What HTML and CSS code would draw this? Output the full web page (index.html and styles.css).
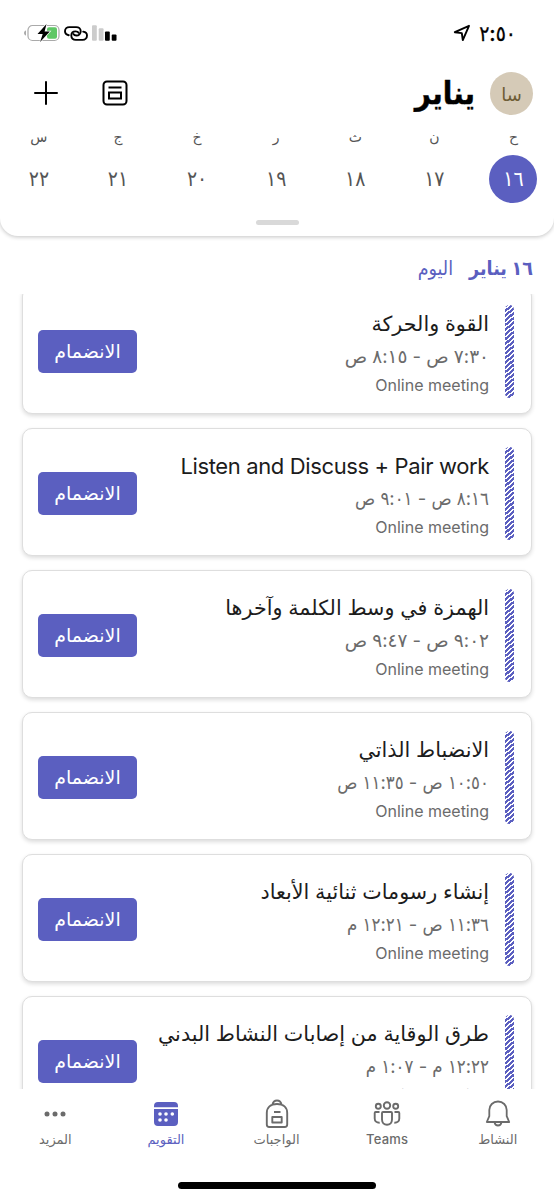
FILE: index.html
```html
<!DOCTYPE html>
<html lang="ar" dir="rtl">
<head>
    <meta charset="UTF-8">
    <meta name="viewport" content="width=device-width, initial-scale=1.0">
    <title>التقويم</title>
    <link rel="stylesheet" href="styles.css">
</head>
<body>
    <header class="top">
        <div class="status-bar">
            <div class="clock">
                <span>٢:٥٠</span>
                <svg width="18" height="18" viewBox="0 0 18 18" fill="none" stroke="#000" stroke-width="1.9" stroke-linejoin="round"><path d="M16 1.8 1.8 8.2l7 .9 1 7z"/></svg>
            </div>
            <div class="indicators">
                <svg width="25" height="16" viewBox="0 0 26 16"><rect x="0" y="0" width="5" height="16" rx="1" fill="#ccc"/><rect x="7" y="3" width="5" height="13" rx="1" fill="#ccc"/><rect x="13.5" y="6.5" width="5" height="9.5" rx="1"/><rect x="20.5" y="9.5" width="5" height="6.5" rx="1"/></svg>
                <svg width="24" height="15" viewBox="0 0 24 15" fill="none" stroke="#000" stroke-width="1.9" stroke-linecap="round"><path d="M4.8 9.2C2.5 8.8 1 7.3 1 5.3 1 2.9 2.9 1.1 5.3 1.1h6.9c2.6 0 4.5 1.7 4.5 4.1s-1.800 4.300-4.300 4.300c-1.600 0-2.500-.6-3-1.400"/><path d="M19.2 5.6c2.3.4 3.8 1.9 3.8 3.9 0 2.600-1.900 4.400-4.300 4.400h-6.900c-2.600 0-4.500-1.800-4.500-4.300s1.800-4.200 4.300-4.200c1.600 0 2.500.5 3 1.400"/></svg>
                <svg width="36" height="18" viewBox="0 0 36 18"><path d="M2 6.500v5C.6 11.200 0 10.200 0 9s.6-2.200 2-2.500z" fill="#aaa"/><rect x="4" y="1.5" width="31" height="15" rx="4.5" fill="#fff" stroke="#aaa" stroke-width="1.2"/><rect x="23" y="3.3" width="10" height="11.4" rx="2" fill="#5fc766"/><path d="M22.500 0 13.500 10h5.200l-2.600 8L25.800 7.500h-5.200z" stroke="#fff" stroke-width="1.4" paint-order="stroke"/></svg>
            </div>
        </div>
        <div class="title-bar">
            <div class="avatar">سا</div>
            <h1>يناير</h1>
            <svg class="agenda" width="26" height="26" viewBox="0 0 26 26" fill="none" stroke="#000" stroke-width="2"><rect x="1.5" y="1.5" width="23" height="23" rx="3.5"/><path d="M6.500 7.500h13M7 12.500h12v6H7z"/></svg>
            <svg width="24" height="24" viewBox="0 0 24 24" stroke="#000" stroke-width="2" stroke-linecap="round"><path d="M12 1v22M1 12h22"/></svg>
        </div>
        <div class="week">
            <div class="day selected"><span>ح</span><b>١٦</b></div>
            <div class="day"><span>ن</span><b>١٧</b></div>
            <div class="day"><span>ث</span><b>١٨</b></div>
            <div class="day"><span>ر</span><b>١٩</b></div>
            <div class="day"><span>خ</span><b>٢٠</b></div>
            <div class="day"><span>ج</span><b>٢١</b></div>
            <div class="day"><span>س</span><b>٢٢</b></div>
        </div>
        <div class="handle"></div>
    </header>

    <h2 class="date"><strong>١٦ يناير</strong><span>اليوم</span></h2>

    <main class="events">
        <article class="event">
            <div class="stripe"></div>
            <div class="info">
                <h3>القوة والحركة</h3>
                <p class="time wide">٧:٣٠ ص - ٨:١٥ ص</p>
                <p class="place">Online meeting</p>
            </div>
            <button>الانضمام</button>
        </article>
        <article class="event">
            <div class="stripe"></div>
            <div class="info">
                <h3 class="latin">Listen and Discuss + Pair work</h3>
                <p class="time">٨:١٦ ص - ٩:٠١ ص</p>
                <p class="place">Online meeting</p>
            </div>
            <button>الانضمام</button>
        </article>
        <article class="event">
            <div class="stripe"></div>
            <div class="info">
                <h3>الهمزة في وسط الكلمة وآخرها</h3>
                <p class="time wide">٩:٠٢ ص - ٩:٤٧ ص</p>
                <p class="place">Online meeting</p>
            </div>
            <button>الانضمام</button>
        </article>
        <article class="event">
            <div class="stripe"></div>
            <div class="info">
                <h3>الانضباط الذاتي</h3>
                <p class="time">١٠:٥٠ ص - ١١:٣٥ ص</p>
                <p class="place">Online meeting</p>
            </div>
            <button>الانضمام</button>
        </article>
        <article class="event">
            <div class="stripe"></div>
            <div class="info">
                <h3>إنشاء رسومات ثنائية الأبعاد</h3>
                <p class="time">١١:٣٦ ص - ١٢:٢١ م</p>
                <p class="place">Online meeting</p>
            </div>
            <button>الانضمام</button>
        </article>
        <article class="event">
            <div class="stripe"></div>
            <div class="info">
                <h3>طرق الوقاية من إصابات النشاط البدني</h3>
                <p class="time">١٢:٢٢ م - ١:٠٧ م</p>
                <p class="place">Online meeting</p>
            </div>
            <button>الانضمام</button>
        </article>
    </main>

    <nav class="tabs">
        <a class="tab">
            <svg width="30" height="30" viewBox="0 0 30 30" fill="none" stroke="#6b6b6b" stroke-width="1.8" stroke-linejoin="round"><path d="M15 2.500c-5 0-8.700 3.800-8.700 8.500v6.200L3.800 23h22.400l-2.500-5.800V11c0-4.700-3.700-8.500-8.700-8.500zM11.500 23.200c.4 2 1.700 3.300 3.500 3.300s3.100-1.300 3.500-3.300"/></svg>
            <span>النشاط</span>
        </a>
        <a class="tab">
            <svg width="30" height="30" viewBox="0 0 30 30" fill="none" stroke="#6b6b6b" stroke-width="1.9"><circle cx="15" cy="6.5" r="3.2"/><circle cx="6.3" cy="7.2" r="2.5"/><circle cx="23.7" cy="7.2" r="2.5"/><path d="M11 13h8q1 0 1 1v6.500c0 3-2 5.200-5 5.200s-5-2.200-5-5.200V14q0-1 1-1zM7.500 13H3.700q-1 0-1 1v5.500c0 2.700 1.800 4.300 5 4.200M22.500 13h3.800q1 0 1 1v5.500c0 2.700-1.800 4.300-5 4.200"/></svg>
            <span class="latin">Teams</span>
        </a>
        <a class="tab">
            <svg width="30" height="30" viewBox="0 0 30 30" fill="none" stroke="#6b6b6b" stroke-width="1.9" stroke-linejoin="round"><path d="M4.800 14C4.800 8.500 8.500 5 15 5s10.200 3.500 10.200 9v11.500c0 1.700-.8 2.500-2.500 2.500H7.300c-1.700 0-2.500-.8-2.500-2.500zM10.500 5.500C11 3 12.500 1.500 15 1.500s4 1.500 4.500 4M12 13h6.500M10.300 18h9.400v5.500h-9.400z"/></svg>
            <span>الواجبات</span>
        </a>
        <a class="tab active">
            <svg width="30" height="30" viewBox="0 0 30 30"><path d="M3 8.200V7a4 4 0 0 1 4-4h16a4 4 0 0 1 4 4v1.200zM3 10h24v13a4 4 0 0 1-4 4H7a4 4 0 0 1-4-4z" fill="#5b5fc0"/><g fill="#fff"><circle cx="9" cy="15" r="1.8"/><circle cx="15" cy="15" r="1.8"/><circle cx="21.3" cy="15" r="1.8"/><circle cx="9" cy="21" r="1.8"/><circle cx="15" cy="21" r="1.8"/></g></svg>
            <span>التقويم</span>
        </a>
        <a class="tab">
            <svg width="30" height="30" viewBox="0 0 30 30" fill="#6b6b6b"><circle cx="7" cy="15" r="2.5"/><circle cx="15" cy="15" r="2.5"/><circle cx="23" cy="15" r="2.5"/></svg>
            <span>المزيد</span>
        </a>
    </nav>
    <div class="home-bar"></div>
</body>
</html>
```
FILE: styles.css
```css
* { box-sizing: border-box; }
body { margin: 0; height: 1200px; display: flex; flex-direction: column; overflow: hidden; background: #fff; color: #1c1c1c; font-family: Inter, "DejaVu Sans", sans-serif; }
h1, h2, h3, p { margin: 0; font-weight: normal; white-space: nowrap; }
svg { display: block; flex: none; }

.top { flex: none; height: 236px; background: #fff; border-radius: 0 0 18px 18px; box-shadow: 0 1px 4px rgba(0,0,0,0.24); }
.status-bar { height: 66px; padding: 0 38px 0 24px; display: flex; justify-content: space-between; align-items: center; }
.clock, .indicators { display: flex; align-items: center; }
.clock { gap: 8px; color: #000; font-family: Inter, "DejaVu Sans Condensed", sans-serif; font-size: 21px; font-weight: 500; -webkit-text-stroke: 0.3px #000; }
.indicators { gap: 4px; }

.title-bar { height: 54px; padding: 0 21px 0 34px; display: flex; align-items: center; }
.avatar { width: 43px; height: 43px; margin-left: 15px; border-radius: 50%; background: #d5cab7; color: #6e5c35; font-size: 18px; line-height: 45px; text-align: center; }
h1 { flex: 1; color: #000; font-family: Inter, "DejaVu Sans Condensed", sans-serif; font-size: 31px; font-weight: bold; line-height: 50px; -webkit-text-stroke: 0.4px #000; }
.agenda { margin-left: 44px; }

.week { height: 86px; margin-right: 1px; display: flex; }
.day { flex: none; width: 79.1px; padding-top: 2px; display: flex; flex-direction: column; align-items: center; color: #555; }
.day span { height: 33px; font-size: 14px; line-height: 30px; }
.day b { width: 48px; height: 48px; border-radius: 50%; font-family: Inter, "DejaVu Sans Condensed", sans-serif; font-size: 21px; font-weight: normal; line-height: 47px; text-align: center; }
.selected b { background: #5b5fc0; color: #fff; }
.handle { width: 43px; height: 5px; margin: 14px auto 0; border-radius: 3px; background: #d9d9d9; }

.date { flex: none; height: 58px; padding: 0 21px; display: flex; gap: 16px; color: #5b5fc0; font-family: Inter, "DejaVu Sans Condensed", sans-serif; font-size: 19.5px; line-height: 64px; }

.events { flex: 1; min-height: 0; padding: 0 22px; overflow: hidden; }
.event { height: 128px; margin-bottom: 14px; padding: 18px 17px 0 15px; display: flex; border: 1px solid #dedede; border-radius: 10px; background: #fff; box-shadow: 0 2px 4px rgba(0,0,0,0.14); }
.event:first-child { margin-top: -8px; }
.stripe { width: 9px; height: 93px; border-radius: 4.5px; background: repeating-linear-gradient(140deg, #5b5fc0 0 2.2px, #fff 2.2px 3.6px); }
.info { flex: 1; padding-right: 16px; }
.info h3 { height: 36px; font-size: 20.7px; line-height: 37px; }
.info h3.latin { font-size: 22px; letter-spacing: -0.37px; line-height: 38px; }
.time { height: 31px; color: #6b6b6b; font-family: Inter, "DejaVu Sans Condensed", sans-serif; font-size: 18.5px; line-height: 31px; }
.time.wide { font-family: Inter, "DejaVu Sans", sans-serif; }
.place { height: 26px; color: #6b6b6b; font-size: 16px; line-height: 26px; }
button { width: 99px; height: 43px; margin-top: 25px; padding: 0; border: none; border-radius: 5px; background: #5b5fc0; color: #fff; font: 19px/43px Inter, "DejaVu Sans", sans-serif; }

.tabs { flex: none; height: 89px; padding: 10px 1px 0 0; display: flex; background: #fff; }
.tab { flex: 1; display: flex; flex-direction: column; align-items: center; color: #6b6b6b; font-size: 13px; line-height: 20px; }
.tab .latin { font-weight: 500; letter-spacing: 0.2px; }
.tab.active { color: #5b5fc0; }
.home-bar { flex: none; width: 198px; height: 7px; margin: 4px auto 11px; border-radius: 4px; background: #000; }
```
